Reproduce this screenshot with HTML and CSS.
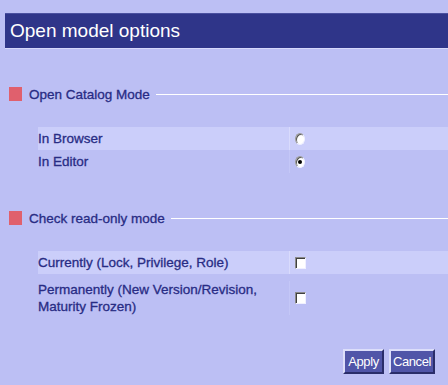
FILE: index.html
```html
<!DOCTYPE html>
<html lang="en">
<head>
  <meta charset="utf-8" />
  <title>Open model options</title>
  <link rel="stylesheet" href="styles.css">
</head>
<body>
  <div class="title">Open model options</div>

  <div class="section">
    <div class="sec-head">
      <span class="mark"></span>
      <span class="sec-label">Open Catalog Mode</span>
      <span class="rule"></span>
    </div>
    <div class="opts">
      <div class="opt hi">
        <div class="opt-label">In Browser</div>
        <div class="opt-ctl"><input class="radio" type="radio" name="mode"></div>
      </div>
      <div class="opt">
        <div class="opt-label">In Editor</div>
        <div class="opt-ctl"><input class="radio" type="radio" name="mode" checked></div>
      </div>
    </div>
  </div>

  <div class="section">
    <div class="sec-head">
      <span class="mark"></span>
      <span class="sec-label">Check read-only mode</span>
      <span class="rule"></span>
    </div>
    <div class="opts">
      <div class="opt hi">
        <div class="opt-label">Currently (Lock, Privilege, Role)</div>
        <div class="opt-ctl"><input class="check" type="checkbox"></div>
      </div>
      <div class="opt tall">
        <div class="opt-label">Permanently (New Version/Revision,<br>Maturity Frozen)</div>
        <div class="opt-ctl"><input class="check" type="checkbox"></div>
      </div>
    </div>
  </div>

  <div class="actions">
    <button class="btn btn-apply">Apply</button>
    <button class="btn btn-cancel">Cancel</button>
  </div>
</body>
</html>
```

FILE: styles.css
```css
*{margin:0;padding:0;box-sizing:border-box;}
html,body{width:100%;height:100%;}
body{
  background:#bcbff4;
  font-family:"Liberation Sans", Arial, sans-serif;
  font-size:13.5px;
  color:#282c84;
  overflow:hidden;
}
.title{
  margin:13px 0 0 5px;
  height:36px;
  line-height:34px;
  padding-left:5px;
  background:#2f3589;
  border-top:1px solid #4a50a0;
  border-bottom:1px solid #d6d8fb;
  color:#fff;
  font-size:19px;
}
.section{
  margin-top:38px;
}
.sec-head{
  display:flex;
  align-items:center;
  height:14px;
  padding-left:9px;
}
.section + .section .sec-head{
  margin-top:1px;
}
.mark{
  width:13px;
  height:14px;
  background:#e0606d;
  margin-right:7px;
}
.sec-label{
  white-space:nowrap;
  margin-right:6px;
  -webkit-text-stroke:0.3px #282c84;
}
.rule{
  flex:1;
  height:1px;
  background:#fff;
}
.opts{
  margin:26px 0 0 38px;
}
.opt{
  display:flex;
  align-items:center;
  min-height:23px;
}
.opt.hi{
  background:#cbcefa;
}
.opt.tall{
  padding:7px 0 5px;
}
.opt-label{
  width:251px;
  line-height:17px;
  -webkit-text-stroke:0.3px #282c84;
}
.opt-ctl{
  flex:1;
  align-self:stretch;
  display:flex;
  align-items:center;
  padding-left:5px;
  border-left:1px solid #c4c7f7;
}
.opt.hi .opt-ctl{
  border-left-color:#d9dbfc;
}
.radio,.check{
  -webkit-appearance:none;
  appearance:none;
  display:block;
  background:#fff;
  margin:0;
}
.radio{
  width:10px;
  height:12px;
  border-radius:50%;
  border:1px solid #9a9a9a;
  border-right-color:#eef0ff;
  border-bottom-color:#eef0ff;
  box-shadow:inset 1px 1px 0 #555;
  position:relative;
}
.radio:checked::after{
  content:"";
  position:absolute;
  left:2px;
  top:3px;
  width:4px;
  height:4px;
  border-radius:50%;
  background:#000;
}
.check{
  width:11px;
  height:12px;
  border:1px solid #8a8a8a;
  border-right-color:#f0f0ff;
  border-bottom-color:#f0f0ff;
  box-shadow:inset 1px 1px 0 #404040;
}
.actions{
  display:flex;
  justify-content:flex-end;
  gap:5px;
  margin:29px 13px 0 0;
}
.btn{
  height:25px;
  padding:0;
  background:#5055a8;
  color:#fff;
  font-family:"Liberation Sans", Arial, sans-serif;
  font-size:13px;
  letter-spacing:-0.4px;
  border:2px solid;
  border-color:#dcdefa #2a2d6a #2a2d6a #dcdefa;
}
.btn-apply{width:41px;}
.btn-cancel{width:46px;}
```
